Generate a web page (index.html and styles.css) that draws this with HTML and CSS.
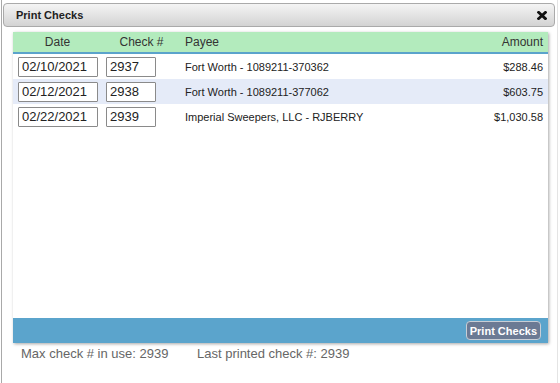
FILE: index.html
```html
<!DOCTYPE html>
<html>
<head>
<meta charset="utf-8">
<link rel="stylesheet" href="styles.css">
</head>
<body>
<div class="dialog">
  <div class="titlebar">
    <span class="title">Print Checks</span>
    <svg class="close" width="10" height="9" viewBox="0 0 10 9"><path d="M1.6 1.4 L8.4 7.6 M8.4 1.4 L1.6 7.6" stroke="#111" stroke-width="2.8" stroke-linecap="square"/></svg>
  </div>
  <div class="panel">
    <div class="row head">
      <div class="c-date">Date</div>
      <div class="c-check">Check #</div>
      <div class="c-payee">Payee</div>
      <div class="c-amt">Amount</div>
    </div>
    <div class="body">
      <div class="row">
        <div class="c-date"><input class="in-date" value="02/10/2021"></div>
        <div class="c-check"><input class="in-check" value="2937"></div>
        <div class="c-payee">Fort Worth - 1089211-370362</div>
        <div class="c-amt">$288.46</div>
      </div>
      <div class="row alt">
        <div class="c-date"><input class="in-date" value="02/12/2021"></div>
        <div class="c-check"><input class="in-check" value="2938"></div>
        <div class="c-payee">Fort Worth - 1089211-377062</div>
        <div class="c-amt">$603.75</div>
      </div>
      <div class="row">
        <div class="c-date"><input class="in-date" value="02/22/2021"></div>
        <div class="c-check"><input class="in-check" value="2939"></div>
        <div class="c-payee">Imperial Sweepers, LLC - RJBERRY</div>
        <div class="c-amt">$1,030.58</div>
      </div>
    </div>
    <div class="footbar"><button class="btn">Print Checks</button></div>
  </div>
  <div class="status">
    <span class="s1">Max check # in use: 2939</span>
    <span>Last printed check #: 2939</span>
  </div>
</div>
</body>
</html>
```

FILE: styles.css
```css
html, body { margin: 0; padding: 0; background: #fff; }
body { font-family: "Liberation Sans", Arial, sans-serif; color: #222; }
.dialog {
  margin-left: 1px;
  width: 557px;
  height: 383px;
  box-sizing: border-box;
  border-left: 1px solid #a9a9a9;
  border-right: 1px solid #e4e4e4;
  padding: 3px 2px 0 1px;
}
.titlebar {
  height: 24px;
  box-sizing: border-box;
  border: 1px solid #aaa;
  border-radius: 4px;
  background: linear-gradient(#f4f4f4, #d3d3d3);
  display: flex;
  align-items: center;
  justify-content: space-between;
  padding: 0 7px 0 12px;
}
.title { font-size: 11px; font-weight: bold; color: #222; }
.close { display: block; }
.panel {
  margin: 5px 7px 0 10px;
  height: 311px;
  display: flex;
  flex-direction: column;
  background: #fff;
  box-shadow: 1px 1px 3px rgba(0,0,0,0.35);
}
.row {
  display: grid;
  grid-template-columns: 89px 79px 1fr 120px;
  align-items: center;
  height: 25px;
  font-size: 11px;
  color: #222;
}
.row.alt { background: #e5ebf8; }
.head {
  height: 20px;
  background: #b3ebbd;
  border-bottom: 2px solid #5ba3cb;
  font-size: 12px;
  color: #333;
}
.head .c-date, .head .c-check { text-align: center; }
.c-date { padding-left: 5px; }
.c-check { padding-left: 4px; }
.head .c-date, .head .c-check { padding-left: 0; }
.c-payee { padding-left: 4px; }
.c-amt { text-align: right; padding-right: 5px; }
.body { flex: 1; }
input {
  display: block;
  box-sizing: border-box;
  height: 20px;
  border: 1px solid #8a8a8a;
  border-radius: 1px;
  padding: 0 3px;
  font-family: "Liberation Sans", Arial, sans-serif;
  font-size: 13px;
  color: #222;
  background: #fff;
  margin: 0;
}
.in-date { width: 80px; }
.in-check { width: 50px; }
.footbar {
  height: 25px;
  background: #5ba4cc;
  display: flex;
  align-items: center;
  justify-content: flex-end;
  padding-right: 7px;
}
.btn {
  height: 19px;
  box-sizing: border-box;
  padding: 0 3px;
  border: 1px solid #c8ced6;
  border-radius: 4px;
  background: #6b7a94;
  color: #fff;
  font-family: "Liberation Sans", Arial, sans-serif;
  font-size: 11px;
  font-weight: bold;
}
.status {
  padding: 3px 0 0 18px;
  font-size: 13px;
  color: #666;
  display: flex;
}
.s1 { width: 176px; }
```
